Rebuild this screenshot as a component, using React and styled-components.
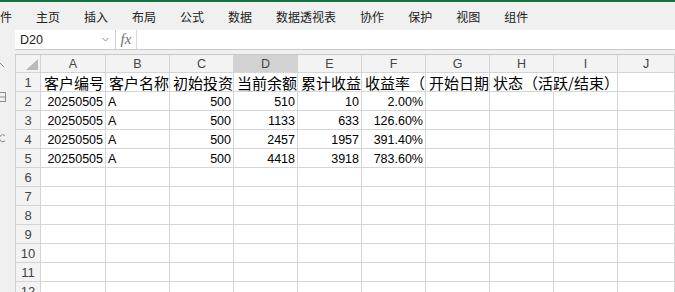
import styled, { createGlobalStyle } from "styled-components";

const GlobalStyle = createGlobalStyle`
    html, body {
        margin: 0;
        padding: 0;
        background: #ffffff;
        overflow: hidden;
    }
    body {
        font-family: "Liberation Sans", "Noto Sans CJK SC", sans-serif;
    }
`;

const tabs = ["文件", "主页", "插入", "布局", "公式", "数据", "数据透视表", "协作", "保护", "视图", "组件"];
const columns = ["A", "B", "C", "D", "E", "F", "G", "H", "I", "J"];

const titles = ["客户编号", "客户名称", "初始投资", "当前余额", "累计收益", "收益率（%）", "开始日期", "状态（活跃/结束）"];

const records = [
    ["20250505", "A", "500", "510", "10", "2.00%"],
    ["20250505", "A", "500", "1133", "633", "126.60%"],
    ["20250505", "A", "500", "2457", "1957", "391.40%"],
    ["20250505", "A", "500", "4418", "3918", "783.60%"],
];

const TOTAL_ROWS = 12;

export default function App() {
    const rows = [];
    for (let r = 1; r <= TOTAL_ROWS; r++) {
        const cells = columns.map((col, i) => {
            if (r === 1) {
                const text = titles[i] || "";
                return (
                    <Cell key={col} $cjk $spill={col === "H"}>
                        {text}
                    </Cell>
                );
            }
            const rec = records[r - 2];
            const text = rec ? rec[i] || "" : "";
            return (
                <Cell key={col} $align={col === "B" ? "left" : "right"}>
                    {text}
                </Cell>
            );
        });
        rows.push(
            <RowHead key={"h" + r}>{r}</RowHead>,
            ...cells.map((c, i) => ({ ...c, key: r + "-" + i }))
        );
    }

    return (
        <>
            <GlobalStyle />
            <Page>
                <GreenLine />
                <TabBar>
                    {tabs.map((t) => (
                        <Tab key={t}>{t}</Tab>
                    ))}
                </TabBar>
                <Main>
                    <SideStrip>
                        <svg width="15" height="262" viewBox="0 0 15 262">
                            <g fill="none" stroke="#8a8a8a" strokeWidth="1">
                                <polyline points="-4,37 0,33 4,37" />
                                <rect x="-5.5" y="62.5" width="11" height="9" />
                                <line x1="-5" y1="67" x2="5" y2="67" />
                                <path d="M5 105.5 A3.5 3.5 0 1 0 5 111" />
                            </g>
                        </svg>
                    </SideStrip>
                    <Work>
                        <FormulaBar>
                            <NameBox>
                                <span>D20</span>
                                <svg width="7" height="5" viewBox="0 0 7 5">
                                    <polyline points="0.5,1 3.5,4 6.5,1" fill="none" stroke="#8c8c8c" strokeWidth="1" />
                                </svg>
                            </NameBox>
                            <FxBox>fx</FxBox>
                            <FormulaInput />
                        </FormulaBar>
                        <Gap />
                        <Sheet>
                            <Corner>
                                <svg width="12" height="11" viewBox="0 0 12 11">
                                    <polygon points="12,0 12,11 0,11" fill="#b9b9b9" />
                                </svg>
                            </Corner>
                            {columns.map((c) => (
                                <ColHead key={c} $active={c === "D"}>
                                    {c}
                                </ColHead>
                            ))}
                            {rows}
                        </Sheet>
                    </Work>
                </Main>
            </Page>
        </>
    );
}

const Page = styled.div`
    width: 675px;
    height: 292px;
    overflow: hidden;
    display: flex;
    flex-direction: column;
`;

const GreenLine = styled.div`
    height: 2px;
    background: #1f6e43;
    flex-shrink: 0;
`;

const TabBar = styled.div`
    height: 28px;
    flex-shrink: 0;
    background: #f0f0f0;
    display: flex;
    align-items: center;
    gap: 24px;
    overflow: hidden;
`;

const Tab = styled.div`
    font-family: "Noto Sans CJK SC", sans-serif;
    font-size: 12px;
    color: #222222;
    white-space: nowrap;
    padding-top: 1px;

    &:first-child {
        margin-left: -12px;
    }
`;

const Main = styled.div`
    flex: 1;
    display: flex;
    min-height: 0;
`;

const SideStrip = styled.div`
    width: 15px;
    flex-shrink: 0;
    background: #f0f0f0;
    overflow: hidden;

    svg {
        display: block;
    }
`;

const Work = styled.div`
    flex: 1;
    min-width: 0;
    display: flex;
    flex-direction: column;
`;

const FormulaBar = styled.div`
    height: 20px;
    box-sizing: border-box;
    border-bottom: 1px solid #c8c8c8;
    background: #ffffff;
    display: flex;
    flex-shrink: 0;
`;

const NameBox = styled.div`
    width: 101px;
    box-sizing: border-box;
    border-right: 1px solid #d0d0d0;
    display: flex;
    align-items: center;
    justify-content: space-between;
    padding: 0 6px 0 5px;
    font-size: 12.5px;
    color: #222222;
`;

const FxBox = styled.div`
    width: 21px;
    box-sizing: border-box;
    border-right: 1px solid #dadada;
    display: flex;
    align-items: center;
    justify-content: center;
    font-family: "Liberation Serif", serif;
    font-style: italic;
    font-size: 15px;
    color: #707070;
`;

const FormulaInput = styled.div`
    flex: 1;
`;

const Gap = styled.div`
    height: 4px;
    background: #f0f0f0;
    flex-shrink: 0;
`;

const Sheet = styled.div`
    display: grid;
    grid-template-columns: 25px 65px repeat(8, 64px) 1fr;
    grid-template-rows: 18px;
    grid-auto-rows: 19px;
    border-top: 1px solid #c8c8c8;
    border-left: 1px solid #d0d0d0;
    background: #ffffff;
`;

const HeadBase = styled.div`
    box-sizing: border-box;
    background: #f3f3f3;
    border-right: 1px solid #d4d4d4;
    border-bottom: 1px solid #d4d4d4;
    display: flex;
    align-items: center;
    justify-content: center;
    font-size: 12.5px;
    color: #444444;
`;

const Corner = styled(HeadBase)`
    align-items: flex-end;
    justify-content: flex-end;
    padding: 0 2px 2px 0;

    svg {
        display: block;
    }
`;

const ColHead = styled(HeadBase)`
    background: ${(p) => (p.$active ? "#d2d2d2" : "#f3f3f3")};
    padding-top: 1px;
`;

const RowHead = styled(HeadBase)`
    font-size: 13px;
    padding-top: 1px;
`;

const Cell = styled.div`
    box-sizing: border-box;
    border-right: 1px solid ${(p) => (p.$spill ? "transparent" : "#d6d6d6")};
    border-bottom: 1px solid #d6d6d6;
    display: flex;
    align-items: center;
    justify-content: ${(p) => (p.$align === "right" ? "flex-end" : "flex-start")};
    padding: ${(p) => (p.$cjk ? "0 0 0 3px" : "1px 2px 0 2px")};
    white-space: nowrap;
    overflow: ${(p) => (p.$spill ? "visible" : "hidden")};
    font-family: ${(p) => (p.$cjk ? '"Noto Sans CJK SC", sans-serif' : '"Liberation Sans", sans-serif')};
    font-size: ${(p) => (p.$cjk ? "15px" : "12.5px")};
    color: #000000;
`;
